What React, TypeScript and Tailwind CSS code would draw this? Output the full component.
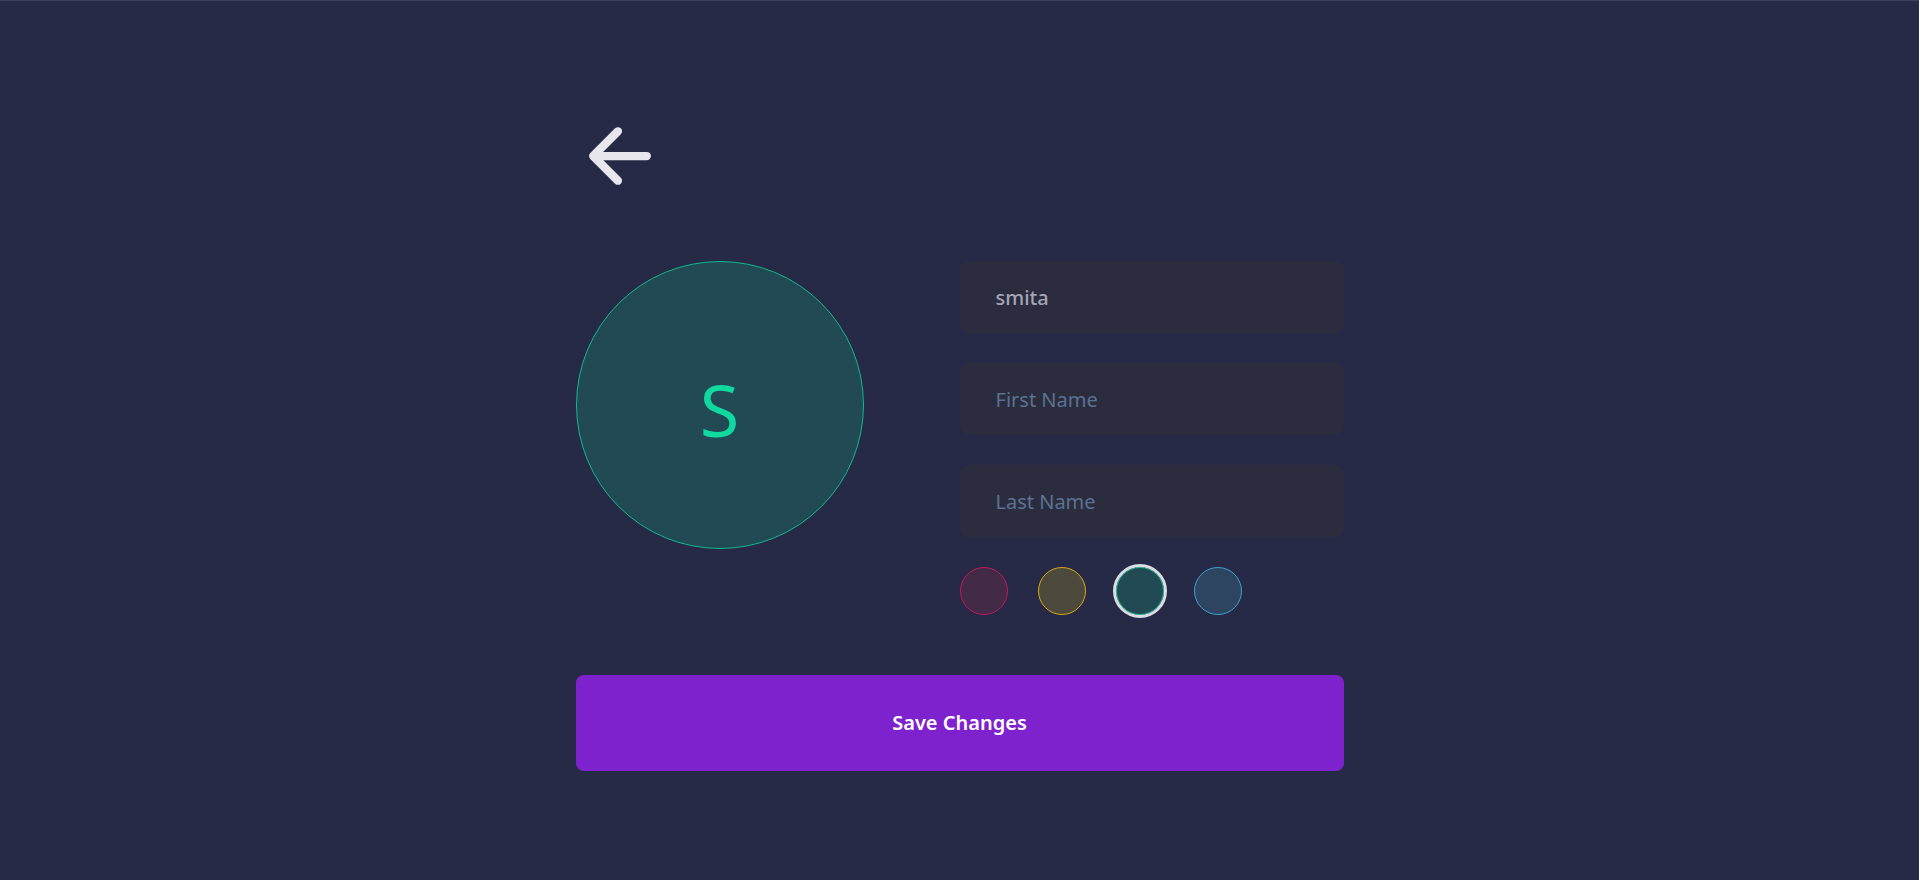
import { useState } from "react";

interface Swatch {
  name: string;
  ring: string;
  fill: string;
}

const swatches: Swatch[] = [
  { name: "pink", ring: "border-[#c2185b]", fill: "bg-[#432a47]" },
  { name: "yellow", ring: "border-[#d9a814]", fill: "bg-[#4d4a3d]" },
  { name: "teal", ring: "border-[#10b98f]", fill: "bg-[#224a55]" },
  { name: "blue", ring: "border-[#3ca2cc]", fill: "bg-[#2e4562]" },
];

const App = () => {
  const [username, setUsername] = useState<string>("smita");
  const [firstName, setFirstName] = useState<string>("");
  const [lastName, setLastName] = useState<string>("");
  const [selected, setSelected] = useState<number>(2);

  const inputClass =
    "h-[72px] w-full rounded-lg bg-[#2b2c3e] px-9 text-xl text-[#a3a5b7] placeholder:text-[#5b7293] outline-none";

  return (
    <div
      className="min-h-screen border-t border-[#3d4059] bg-[#262a46]"
      style={{ fontFamily: '"Noto Sans", "Open Sans", sans-serif' }}
    >
      <div className="mx-auto w-[768px] pt-[111px]">
        {/* back */}
        <button className="block h-[88px] w-[88px] text-[#e6e6ec]">
          <svg viewBox="0 0 512 512" width="88" height="88">
            <path
              d="M244 400 100 256l144-144M120 256h292"
              fill="none"
              stroke="currentColor"
              strokeWidth="48"
              strokeLinecap="round"
              strokeLinejoin="round"
            />
          </svg>
        </button>

        <div className="mt-[61px] grid grid-cols-2">
          <div>
            <div className="flex h-[288px] w-[288px] items-center justify-center rounded-full border border-[#10b98f] bg-[#224a55]">
              <span className="mt-2 text-[72px] leading-none text-[#10d9a0]">
                {(username[0] || "").toUpperCase()}
              </span>
            </div>
          </div>

          <div className="flex flex-col gap-[30px]">
            <input
              className={`${inputClass} font-medium`}
              value={username}
              onChange={(e) => setUsername(e.target.value)}
            />
            <input
              className={inputClass}
              placeholder="First Name"
              value={firstName}
              onChange={(e) => setFirstName(e.target.value)}
            />
            <input
              className={inputClass}
              placeholder="Last Name"
              value={lastName}
              onChange={(e) => setLastName(e.target.value)}
            />
            <div className="flex gap-[30px]">
              {swatches.map((s, i) => (
                <button
                  key={s.name}
                  onClick={() => setSelected(i)}
                  className={`h-12 w-12 rounded-full border ${s.ring} ${s.fill} ${
                    i === selected ? "outline-[3px] outline-solid outline-[#dcdce4]" : ""
                  }`}
                />
              ))}
            </div>
          </div>
        </div>

        <button className="mt-[60px] h-24 w-full rounded-lg bg-[#7e22ce] text-xl font-semibold text-white">
          Save Changes
        </button>
      </div>
    </div>
  );
};

export default App;
